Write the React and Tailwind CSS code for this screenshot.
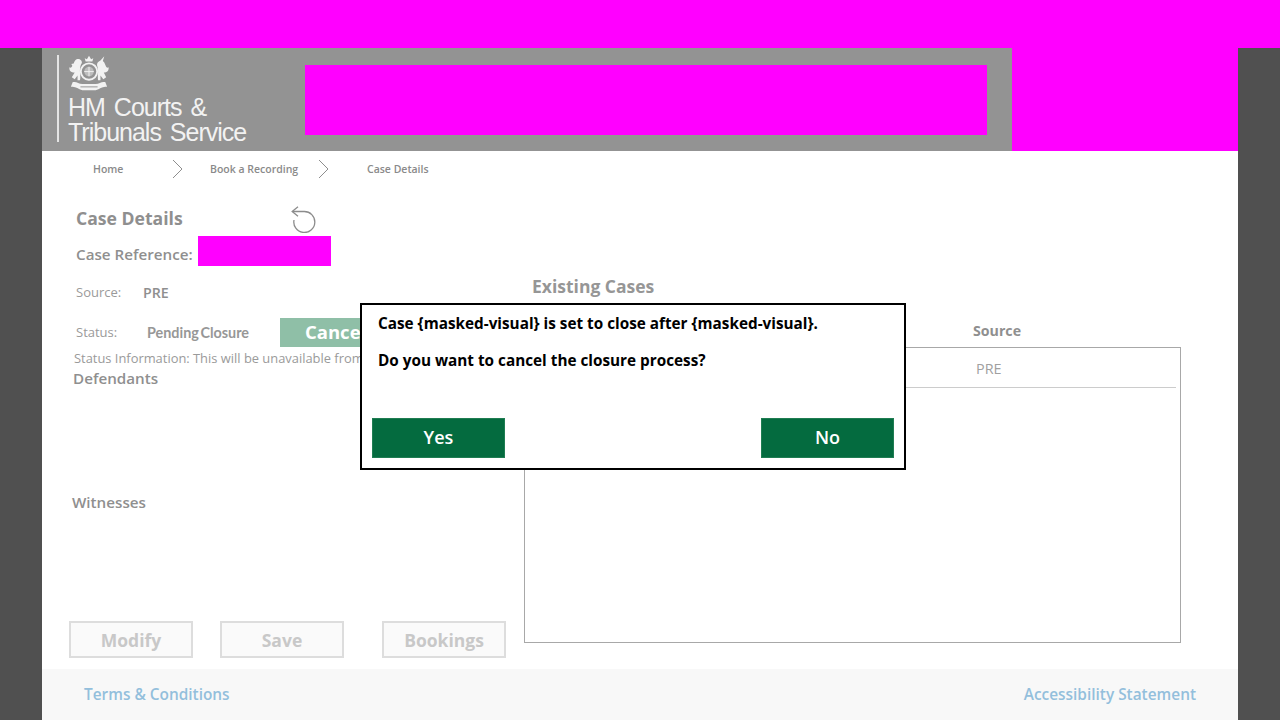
import React from "react";

const openSans = { fontFamily: '"Open Sans", sans-serif' };

// Simplified royal crest for the logo
const Crest = () => (
  <svg width="42" height="37" viewBox="0 0 44 38" className="block">
    <g fill="#f2f2f2">
      {/* crown */}
      <path d="M18.5 6.5 L17.5 3 L19.8 4.2 L22 0.5 L24.2 4.2 L26.5 3 L25.5 6.5 Z" />
      {/* garter and shield */}
      <circle cx="22" cy="17" r="8.6" fill="none" stroke="#f2f2f2" strokeWidth="2" />
      <circle cx="22" cy="17" r="5" fill="#bdbdbd" />
      <path d="M22 12 V22 M17 17 H27" stroke="#f2f2f2" strokeWidth="1" />
      {/* lion */}
      <path d="M9 4 C12 3 15 5 14.5 8 C13 10 12.5 13 12.5 16 C12.5 20 13.5 23 12.5 26 L10 26 L10 21 L7 25 L4 23 L7 18 C3 18 1 16 1.5 12.5 C3 13.5 4 12.5 4.5 11 L3.5 9 L6 8.5 C6.5 6.5 7.5 5 9 4 Z" />
      {/* unicorn */}
      <path d="M38 1 L34 5.5 C31.5 6.5 30 8.5 30.5 11 C31.5 13 31.5 16 31.5 18 C31.5 21 31 23 31.5 26 L34 26 L34 21 L37 25 L40 23 L37.5 18 C41 18 43 16 42.5 12.5 C41 13.5 40 12.5 39.5 11 L38 7.5 L36.5 6 Z" />
      {/* motto ribbon */}
      <path d="M5 28 C9 27 11 30 15 30 L29 30 C33 30 35 27 39 28 L41 33 C36 32 34 35 29 36.5 L15 36.5 C10 35 8 32 3 33 Z" />
    </g>
    <path d="M13 33 H31" stroke="#939393" strokeWidth="1" />
  </svg>
);

const Chevron = () => (
  <svg width="12" height="20" viewBox="0 0 12 20" className="block">
    <path d="M1 1 L10 10 L1 19" fill="none" stroke="#8e8e8e" strokeWidth="1" />
  </svg>
);

const UndoIcon = () => (
  <svg width="26" height="27" viewBox="0 0 26 27" className="block">
    <path
      d="M3 5.5 H14 A10.5 10.5 0 1 1 4 14"
      fill="none"
      stroke="#8c8c8c"
      strokeWidth="1.3"
    />
    <path d="M8 0.8 L2.2 5.5 L8 10.2" fill="none" stroke="#8c8c8c" strokeWidth="1.3" />
  </svg>
);

const DisabledButton = ({ label, className }) => (
  <button className={`h-[37px] w-[124px] border-2 border-[#dddddd] bg-[#fafafa] pt-[2px] text-[17.5px] font-bold text-[#c8c8c8] ${className}`}>
    {label}
  </button>
);

const App = () => {
  return (
    <div className="relative flex h-[720px] w-[1280px] flex-col overflow-hidden bg-[#505050]" style={openSans}>
      {/* masked top bar */}
      <div className="h-12 shrink-0 bg-[#ff00ff]" />

      <div className="mx-[42px] flex flex-1 flex-col bg-white">
        {/* HEADER */}
        <div className="flex h-[103px] shrink-0">
          <div className="flex w-[970px] bg-[#939393]">
            <div className="ml-[15px] mt-[7px] h-[87px] w-[2px] bg-[#e4e4e4]" />
            <div className="ml-[9px] w-[230px]" style={{ fontFamily: '"Liberation Sans", sans-serif' }}>
              <div className="mt-[7px]">
                <Crest />
              </div>
              <div className="mt-[3px] text-[25px] leading-[25px] tracking-[-1px] text-[#f2f2f2] [word-spacing:3px]">
                HM Courts &amp;
                <br />
                Tribunals Service
              </div>
            </div>
            <div className="ml-[7px] mt-[17px] h-[70px] w-[682px] bg-[#ff00ff]" />
          </div>
          <div className="flex-1 bg-[#ff00ff]" />
        </div>

        {/* BREADCRUMB */}
        <div className="flex h-9 shrink-0 items-center text-[10.5px] font-semibold text-[#8a8a8a]">
          <span className="ml-[51px] mt-[2px] w-[79px]">Home</span>
          <Chevron />
          <span className="ml-[26px] mt-[2px] w-[108px] whitespace-nowrap">Book a Recording</span>
          <Chevron />
          <span className="ml-[37px] mt-[2px]">Case Details</span>
        </div>

        {/* MAIN */}
        <div className="flex flex-1">
          <div className="flex w-[482px] shrink-0 flex-col">
            <div className="ml-[34px] mt-[18px] flex h-[27px] items-center">
              <span className="w-[214px] text-[17.6px] font-bold leading-none text-[#8f8f8f]">Case Details</span>
              <div className="mt-[2px]">
                <UndoIcon />
              </div>
            </div>
            <div className="ml-[34px] mt-[4px] flex h-[30px] items-center">
              <span className="mt-[6px] w-[122px] whitespace-nowrap text-[15.2px] font-semibold text-[#8f8f8f]">Case Reference:</span>
              <div className="h-[30px] w-[133px] bg-[#ff00ff]" />
            </div>
            <div className="ml-[34px] mt-[12px] flex h-[30px] items-center">
              <span className="w-[67px] text-[13px] text-[#9a9a9a]">Source:</span>
              <span className="text-[14.2px] font-semibold text-[#8f8f8f]">PRE</span>
            </div>
            <div className="ml-[34px] mt-[10px] flex h-[29px] items-center">
              <span className="w-[71px] text-[13px] text-[#9a9a9a]">Status:</span>
              <span
                className="w-[133px] text-[14.4px] font-bold text-[#979797] [word-spacing:-2px]"
                style={{ fontFamily: "Lato, sans-serif" }}
              >
                Pending Closure
              </span>
              <button className="h-[29px] w-[120px] bg-[#8fbfa7] pb-[2px] pl-[25px] text-left text-[18.5px] font-bold text-white">
                Cancel
              </button>
            </div>
            <div className="ml-[32px] mt-[2px] h-[18px] whitespace-nowrap text-[12.9px] leading-[18px] text-[#9a9a9a]">
              Status Information: This will be unavailable from
            </div>
            <div className="ml-[31px] mt-[1px] text-[15.2px] font-semibold leading-[20px] text-[#8f8f8f]">Defendants</div>
            <div className="ml-[30px] mt-[104px] text-[15.2px] font-semibold leading-[20px] text-[#8f8f8f]">Witnesses</div>
            <div className="ml-[27px] mt-[109px] flex">
              <DisabledButton label="Modify" />
              <DisabledButton label="Save" className="ml-[27px]" />
              <DisabledButton label="Bookings" className="ml-[38px]" />
            </div>
          </div>

          <div className="flex w-[657px] flex-col">
            <div className="ml-[8px] mt-[86px] text-[17.5px] font-bold leading-[26px] text-[#969696]">Existing Cases</div>
            <div className="ml-[449px] mt-[22px] text-[14.2px] font-bold leading-[20px] text-[#8f8f8f]">Source</div>
            <div className="mt-[6px] h-[296px] border border-[#a8a8a8]">
              <div className="mr-[4px] flex h-[40px] items-center border-b border-[#cccccc] pl-[451px] pt-[2px] text-[14.4px] text-[#a0a0a0]">
                PRE
              </div>
            </div>
          </div>
        </div>

        {/* FOOTER */}
        <div className="flex h-[51px] shrink-0 items-center justify-between bg-[#f8f8f8] pl-[42px] pr-[42px] text-[15.4px] font-semibold text-[#93bfdc]">
          <span>Terms &amp; Conditions</span>
          <span>Accessibility Statement</span>
        </div>
      </div>

      {/* DIALOG */}
      <div className="absolute left-[360px] top-[303px] flex h-[167px] w-[546px] flex-col border-2 border-black bg-white">
        <div className="ml-[16px] mt-[7px] text-[15.3px] font-bold leading-[22px] text-black">
          Case {"{masked-visual}"} is set to close after {"{masked-visual}"}.
        </div>
        <div className="ml-[16px] mt-[15px] text-[15.3px] font-bold leading-[22px] text-black">
          Do you want to cancel the closure process?
        </div>
        <div className="mx-[10px] mt-[47px] flex justify-between">
          <button className="h-10 w-[133px] border border-[#1f7d52] bg-[#046b3f] pb-[2px] text-[18px] font-semibold text-white">Yes</button>
          <button className="h-10 w-[133px] border border-[#1f7d52] bg-[#046b3f] pb-[2px] text-[18px] font-semibold text-white">No</button>
        </div>
      </div>
    </div>
  );
};

export default App;
